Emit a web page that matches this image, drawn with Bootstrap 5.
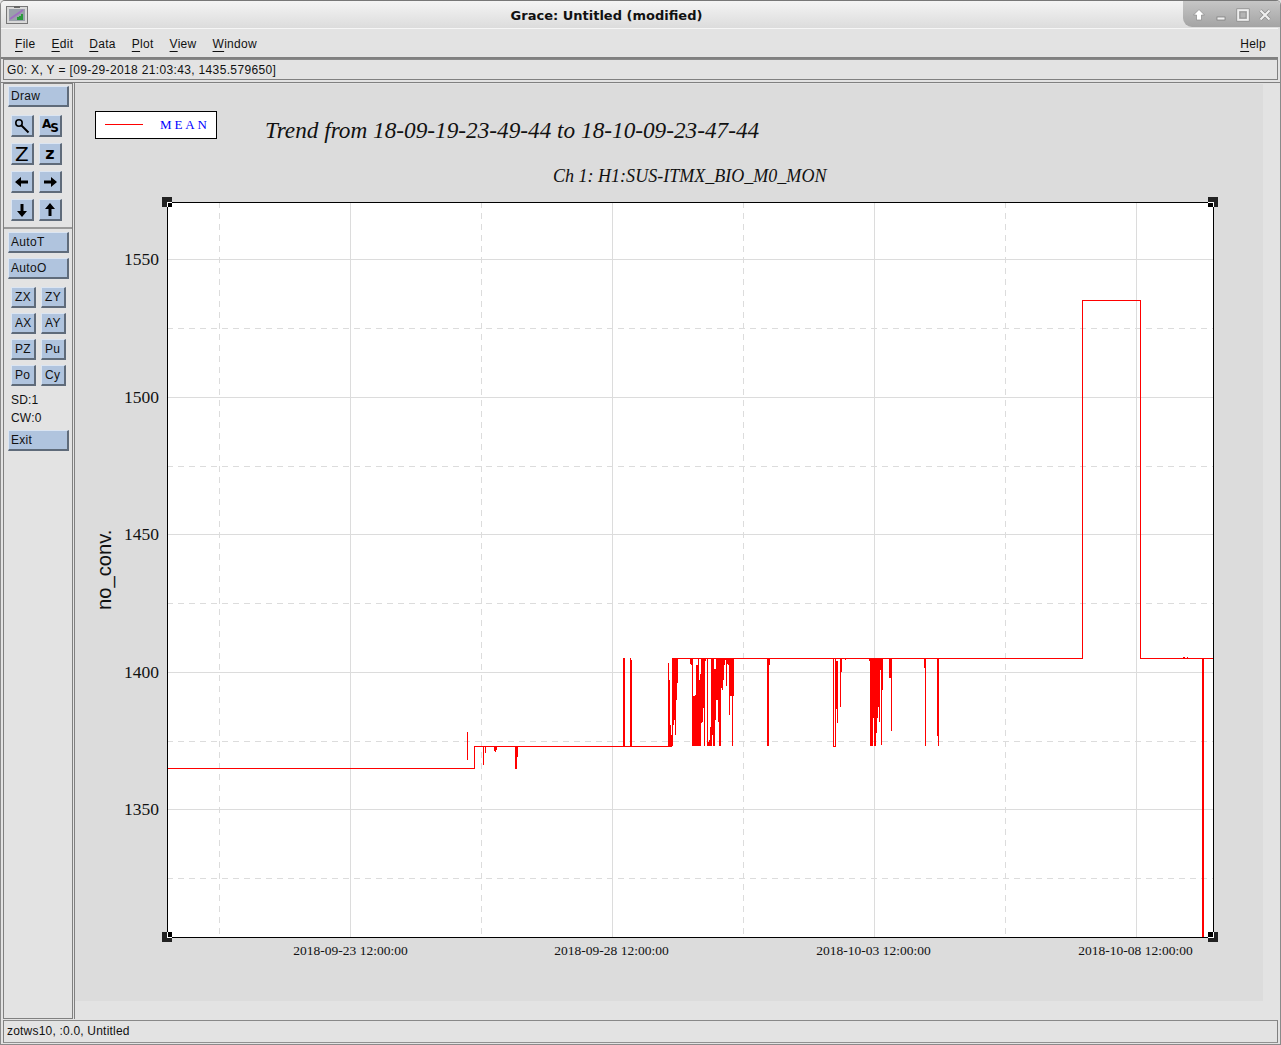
<!DOCTYPE html>
<html lang="en">
<head>
<meta charset="utf-8">
<title>Grace: Untitled (modified)</title>
<link href="https://cdn.jsdelivr.net/npm/bootstrap@5.3.0/dist/css/bootstrap.min.css" rel="stylesheet">
<style>
html,body{margin:0;height:1045px;overflow:hidden;background:#e3e3e3}
body{font:12px/14px "Liberation Sans",Arial,sans-serif;color:#111}
.gr-win{height:1045px;border:1px solid #8a8a8a;border-top-color:#777;border-radius:5px 5px 0 0;background:#e3e3e3}
.gr-title{height:27px;background:linear-gradient(#f4f4f4,#dcdcdc);flex:none}
.gr-appicon{width:22px;height:18px;margin:5px 2px 0 5px;flex:none}
.gr-titletext{font:bold 13px/30px "DejaVu Sans","Liberation Sans",sans-serif;color:#111}
.gr-ctrl{width:97px;height:26px;padding:7px 0 0 9px;gap:8px;background:linear-gradient(#c6c6c6,#a4a4a4);border-bottom-left-radius:9px;flex:none}
.gr-menubar{height:31px;margin:0 2px 0 0;padding:8px 12px 0 14px;border-top:1px solid #f6f6f6;border-bottom:2px solid #808080;flex:none;letter-spacing:.28px}
.gr-menuitem{margin-right:16px;color:#111}
.gr-menuitem u{text-underline-offset:3px}
.gr-statusbox{margin:0 2px 0 2px;border:1px solid #808080;border-top-color:#888;flex:none;color:#111}
.gr-loc{height:21px;padding:3px 3px 0;margin-bottom:2px;font-size:12px;letter-spacing:.35px}
.gr-foot{height:23px;padding:3px 3px 0;margin-top:1px;margin-bottom:1px;border-bottom-color:#909090;font-size:12px;letter-spacing:.2px}
.gr-main{min-height:0;border-top:1px solid #808080}
.gr-tools{width:70px;margin-left:2px;border:1px solid #808080;padding:2px 3px 0 4px;flex:none}
.gr-canvasframe{margin-left:1px;border-left:1px solid #808080;padding:1px 0 0 0;min-width:0}
.gr-canvas{width:1188px;height:917px;display:block;background:#dcdcdc}
.gr-btn{--bs-btn-border-radius:0;display:block;padding:0;border-style:solid;border-width:1px 2px 2px 1px;border-color:#dbe5f2 #5f6b7a #5f6b7a #dbe5f2;border-radius:0;background:#b0c4de;color:#111;font:12px/14px "Liberation Sans",Arial,sans-serif;letter-spacing:.3px;text-align:left}
.gr-btn:hover,.gr-btn:active{background:#b0c4de;color:#111;border-color:#dbe5f2 #5f6b7a #5f6b7a #dbe5f2}
.gr-wide{width:61px;height:21px;padding-left:2px}
.gr-ico{width:23px;height:22px;text-align:center;display:flex;align-items:center;justify-content:center}
.gr-sm{width:25px;height:21px;padding-left:3px}
.gr-row{gap:5px;padding-left:3px;margin-bottom:6px}
.gr-row2{gap:5px;padding-left:3px;margin-bottom:5px}
.gr-sep2{height:2px;background:#9a9a9a;margin:0 -3px 3px -4px}
.gr-gap5{height:5px}
.gr-gap8{height:8px}
.gr-stat{padding-left:3px;height:18px;line-height:18px;letter-spacing:.2px}
.gr-exit{margin-top:3px}
.gr-iconletter{font-family:"DejaVu Sans","Liberation Sans",sans-serif;font-weight:700;color:#000;line-height:1}
.gr-z1{font-size:20px;font-weight:400}
.gr-z2{font-size:16px}
.gr-as{font-size:12px;letter-spacing:-1px;position:relative;top:-2px}
.gr-as i{font-style:normal;position:relative;top:4px}
.gr-serif{font-family:"Liberation Serif","Times New Roman",serif}
.gr-sans{font-family:"Liberation Sans",Arial,sans-serif}
</style>
</head>
<body>
<div class="gr-win d-flex flex-column overflow-hidden">
  <div class="gr-title d-flex">
    <svg class="gr-appicon" viewBox="0 0 22 18"><rect x=".5" y=".5" width="21" height="17" fill="#d8d8d8" stroke="#777"/><rect x="3" y="3" width="16" height="12" fill="#9aa0aa"/><path d="M4 13 17 4" stroke="#a070c0" stroke-width="2"/><path d="M12 14v-3M14 14v-4M16 14v-6" stroke="#2a9a3a" stroke-width="2"/><rect x="8" y="0" width="6" height="2" fill="#666"/></svg>
    <div class="gr-titletext flex-grow-1 text-center">Grace: Untitled (modified)</div>
    <div class="gr-ctrl d-flex">
      <svg width="14" height="14" viewBox="0 0 14 14"><path d="M7 1.500 12.500 7H9.500V12H4.500V7H1.500Z" fill="#fff" stroke="#8a8a8a" stroke-width=".7"/></svg>
      <svg width="14" height="14" viewBox="0 0 14 14"><rect x="3" y="9" width="8" height="3" fill="#f0f0f0" stroke="#777" stroke-width=".7"/></svg>
      <svg width="14" height="14" viewBox="0 0 14 14"><rect x="2" y="2" width="10" height="10" fill="#b4b4b4" stroke="#eee" stroke-width="2"/><rect x=".8" y=".8" width="12.400" height="12.400" fill="none" stroke="#8a8a8a" stroke-width=".7"/><rect x="4" y="4" width="6" height="6" fill="none" stroke="#8a8a8a" stroke-width=".7"/></svg>
      <svg width="14" height="14" viewBox="0 0 14 14"><path d="M2.500 2.500 11.500 11.500M11.500 2.500 2.500 11.500" stroke="#8a8a8a" stroke-width="3.400"/><path d="M2.500 2.500 11.500 11.500M11.500 2.500 2.500 11.500" stroke="#f0f0f0" stroke-width="2.200"/></svg>
    </div>
  </div>
  <nav class="gr-menubar d-flex">
    <span class="gr-menuitem"><u>F</u>ile</span>
    <span class="gr-menuitem"><u>E</u>dit</span>
    <span class="gr-menuitem"><u>D</u>ata</span>
    <span class="gr-menuitem"><u>P</u>lot</span>
    <span class="gr-menuitem"><u>V</u>iew</span>
    <span class="gr-menuitem"><u>W</u>indow</span>
    <span class="gr-menuitem ms-auto me-0"><u>H</u>elp</span>
  </nav>
  <div class="gr-statusbox gr-loc">G0: X, Y = [09-29-2018 21:03:43, 1435.579650]</div>
  <div class="gr-main d-flex flex-grow-1">
    <div class="gr-tools d-flex flex-column">
      <button type="button" class="btn gr-btn gr-wide">Draw</button>
      <div class="gr-gap8"></div>
      <div class="d-flex gr-row">
        <button type="button" class="btn gr-btn gr-ico" aria-label="Zoom"><svg width="18" height="18" viewBox="0 0 18 18"><circle cx="6" cy="6" r="3.200" fill="none" stroke="#000" stroke-width="1.600"/><path d="M8.500 8.500 15.500 15.500" stroke="#000" stroke-width="2"/></svg></button>
        <button type="button" class="btn gr-btn gr-ico"><span class="gr-iconletter gr-as">A<i>S</i></span></button>
      </div>
      <div class="d-flex gr-row">
        <button type="button" class="btn gr-btn gr-ico"><span class="gr-iconletter gr-z1">Z</span></button>
        <button type="button" class="btn gr-btn gr-ico"><span class="gr-iconletter gr-z2">z</span></button>
      </div>
      <div class="d-flex gr-row">
        <button type="button" class="btn gr-btn gr-ico" aria-label="Left"><svg width="16" height="12" viewBox="0 0 16 12"><path d="M1 6 7 1V4.500H14V7.500H7V11Z"/></svg></button>
        <button type="button" class="btn gr-btn gr-ico" aria-label="Right"><svg width="16" height="12" viewBox="0 0 16 12"><path d="M15 6 9 1V4.500H2V7.500H9V11Z"/></svg></button>
      </div>
      <div class="d-flex gr-row">
        <button type="button" class="btn gr-btn gr-ico" aria-label="Down"><svg width="12" height="16" viewBox="0 0 12 16"><path d="M6 15 1 9H4.500V2H7.500V9H11Z"/></svg></button>
        <button type="button" class="btn gr-btn gr-ico" aria-label="Up"><svg width="12" height="16" viewBox="0 0 12 16"><path d="M6 1 1 7H4.500V14H7.500V7H11Z"/></svg></button>
      </div>
      <div class="gr-sep2"></div>
      <button type="button" class="btn gr-btn gr-wide">AutoT</button>
      <div class="gr-gap5"></div>
      <button type="button" class="btn gr-btn gr-wide">AutoO</button>
      <div class="gr-gap8"></div>
      <div class="d-flex gr-row2"><button type="button" class="btn gr-btn gr-sm">ZX</button><button type="button" class="btn gr-btn gr-sm">ZY</button></div>
      <div class="d-flex gr-row2"><button type="button" class="btn gr-btn gr-sm">AX</button><button type="button" class="btn gr-btn gr-sm">AY</button></div>
      <div class="d-flex gr-row2"><button type="button" class="btn gr-btn gr-sm">PZ</button><button type="button" class="btn gr-btn gr-sm">Pu</button></div>
      <div class="d-flex gr-row2"><button type="button" class="btn gr-btn gr-sm">Po</button><button type="button" class="btn gr-btn gr-sm">Cy</button></div>
      <div class="gr-stat">SD:1</div>
      <div class="gr-stat">CW:0</div>
      <button type="button" class="btn gr-btn gr-wide gr-exit">Exit</button>
    </div>
    <div class="gr-canvasframe flex-grow-1">
      <svg class="gr-canvas" viewBox="75 84 1188 917" xmlns="http://www.w3.org/2000/svg">
        <rect x="167" y="202" width="1046" height="735" fill="#fff"/>
        <g shape-rendering="crispEdges" stroke="#dcdcdc" fill="none">
          <path d="M167 259.500H1213M167 397.500H1213M167 534.500H1213M167 672.500H1213M167 809.500H1213M350.500 202V937M612.500 202V937M874.500 202V937M1136.500 202V937"/>
          <path stroke-dasharray="6 5" d="M167 328.500H1213M167 466.500H1213M167 603.500H1213M167 741.500H1213M167 878.500H1213M219.500 202V937M481.500 202V937M743.500 202V937M1005.500 202V937"/>
        </g>
        <g shape-rendering="crispEdges" stroke="#f00" fill="none">
          <path d="M167 768.500H474.500V746.500H672M672 658.500H1082.500V300.500H1140.500V658.500H1213"/>
          <path d="M467.500 732V760M483.500 746V765M485.500 746V753M494.500 746V751M495.500 746V752M496.500 746V750M515.500 746V769M516.500 746V769M517.500 746V757M623.500 658V746M624.500 658V746M630.500 658V746M631.500 660V746"/>
          <path d="M668.500 663V746M669.500 680V746M670.500 725V746M671.500 735V746M672.500 659V746M673.500 659V725M674.500 659V720M675.500 659V735M676.500 659V700M677.500 659V683M690.500 659V664M691.500 659V665M692.500 659V746M693.500 696V746M694.500 696V746M695.500 695V746M696.500 665V746M697.500 665V746M698.500 659V746M699.500 680V746M700.500 674V746M701.500 659V723M702.500 659V722M703.500 659V708M704.500 659V746M705.500 659V661M707.500 659V746M708.500 742V746M709.500 740V746M710.500 727V746M711.500 659V746M712.500 659V735M713.500 659V746M714.500 669V746M715.500 669V720M716.500 659V700M717.500 659V700M718.500 659V722M719.500 659V746M720.500 659V746M721.500 659V688M722.500 659V690M723.500 659V680M724.500 659V665M725.500 659V660M726.500 659V686M727.500 659V664M728.500 659V665M729.500 659V715M730.500 659V696M731.500 659V696M732.500 659V746M733.500 659V696"/>
          <path d="M767.500 659V746M768.500 659V746M769.500 659V665"/>
          <path d="M833.500 659V746.500H835.500V659M836.500 661V709M837.500 661V723M840.500 659V707M841.500 659V672M845.500 659V660"/>
          <path d="M869.500 659V661M870.500 659V746M871.500 659V746M872.500 659V746M873.500 659V718M874.500 659V746M875.500 659V746M876.500 659V733M877.500 659V718M878.500 659V707M879.500 659V722M880.500 659V670M881.500 659V745M882.500 659V690M889.500 659V678M890.500 659V678M891.500 659V731"/>
          <path d="M924.500 659V668M925.500 659V746M937.500 659V736M938.500 659V746"/>
          <path d="M1183.500 657V659M1184.500 657V659M1187.500 657V659M1202.500 659V937M1203.500 659V937"/>
        </g>
        <rect x="167.500" y="202.500" width="1046" height="735" fill="none" stroke="#000" shape-rendering="crispEdges"/>
        <g shape-rendering="crispEdges">
          <rect x="162" y="197" width="10" height="10" fill="#222"/><path d="M167.500 207V202.500H172" fill="none" stroke="#fff"/><rect x="168" y="203" width="4" height="4" fill="#000"/>
          <rect x="1208" y="197" width="10" height="10" fill="#222"/><path d="M1208 202.500H1213.500V207" fill="none" stroke="#fff"/><rect x="1208" y="203" width="5" height="4" fill="#000"/>
          <rect x="162" y="932" width="10" height="10" fill="#222"/><path d="M167.500 932V937.500H172" fill="none" stroke="#fff"/><rect x="168" y="932" width="4" height="5" fill="#000"/>
          <rect x="1208" y="932" width="10" height="10" fill="#222"/><path d="M1208 937.500H1213.500V932" fill="none" stroke="#fff"/><rect x="1208" y="932" width="5" height="5" fill="#000"/>
          <rect x="95.500" y="111.500" width="121" height="27" fill="#fff" stroke="#000"/>
          <path d="M105 124.500H143" stroke="#f00" fill="none"/>
        </g>
        <text x="160" y="129" class="gr-serif" font-size="13" letter-spacing="2.900" fill="#00f">MEAN</text>
        <text x="265" y="138" class="gr-serif" font-size="23.250" font-style="italic" fill="#111">Trend from 18-09-19-23-49-44 to 18-10-09-23-47-44</text>
        <text x="553" y="181.500" class="gr-serif" font-size="18.050" font-style="italic" fill="#111">Ch 1: H1:SUS-ITMX_BIO_M0_MON</text>
        <g class="gr-serif" font-size="17.500" fill="#111" text-anchor="end">
          <text x="159" y="265">1550</text><text x="159" y="403">1500</text><text x="159" y="540">1450</text><text x="159" y="678">1400</text><text x="159" y="815">1350</text>
        </g>
        <g class="gr-serif" font-size="13.500" fill="#111" text-anchor="middle">
          <text x="350.500" y="955">2018-09-23 12:00:00</text><text x="611.500" y="955">2018-09-28 12:00:00</text><text x="873.500" y="955">2018-10-03 12:00:00</text><text x="1135.500" y="955">2018-10-08 12:00:00</text>
        </g>
        <text transform="translate(111 610) rotate(-90)" class="gr-sans" font-size="20.200" fill="#111">no_conv.</text>
      </svg>
    </div>
  </div>
  <div class="gr-statusbox gr-foot">zotws10, :0.0, Untitled</div>
</div>
<script src="https://cdn.jsdelivr.net/npm/bootstrap@5.3.0/dist/js/bootstrap.bundle.min.js"></script>
</body>
</html>
